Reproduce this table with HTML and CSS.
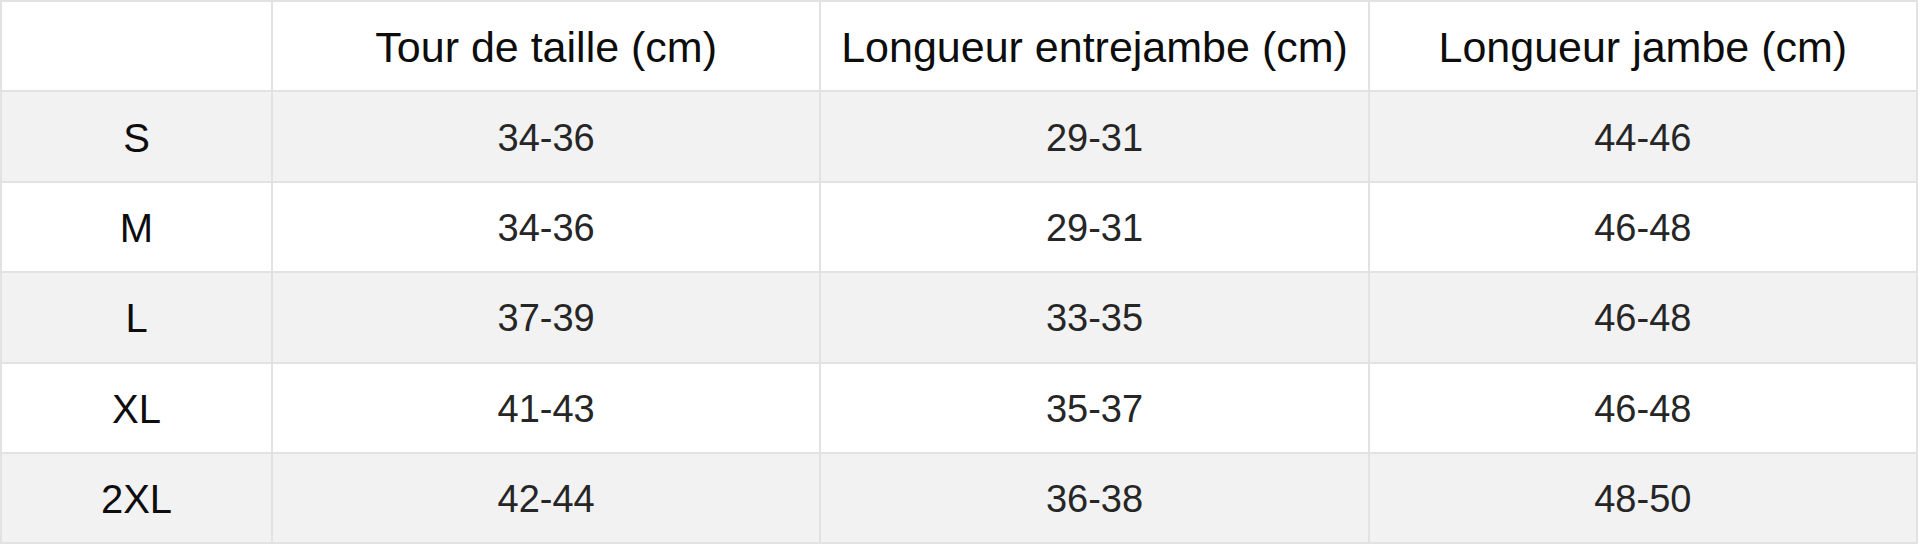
FILE: index.html
```html
<!DOCTYPE html>
<html lang="fr">
<head>
<meta charset="utf-8">
<title>Guide des tailles</title>
<link rel="stylesheet" href="styles.css">
</head>
<body>
<table class="size-table">
  <colgroup>
    <col class="col-size">
    <col class="col-val">
    <col class="col-val">
    <col class="col-val">
  </colgroup>
  <thead>
    <tr>
      <th></th>
      <th>Tour de taille (cm)</th>
      <th>Longueur entrejambe (cm)</th>
      <th>Longueur jambe (cm)</th>
    </tr>
  </thead>
  <tbody>
    <tr class="alt"><th>S</th><td>34-36</td><td>29-31</td><td>44-46</td></tr>
    <tr><th>M</th><td>34-36</td><td>29-31</td><td>46-48</td></tr>
    <tr class="alt"><th>L</th><td>37-39</td><td>33-35</td><td>46-48</td></tr>
    <tr><th>XL</th><td>41-43</td><td>35-37</td><td>46-48</td></tr>
    <tr class="alt"><th>2XL</th><td>42-44</td><td>36-38</td><td>48-50</td></tr>
  </tbody>
</table>
</body>
</html>
```

FILE: styles.css
```css
html, body {
  margin: 0;
  padding: 0;
  background: #ffffff;
}

.size-table {
  width: 1918px;
  border-collapse: collapse;
  table-layout: fixed;
  font-family: "Liberation Sans", Arial, sans-serif;
  color: #111111;
}

.col-size {
  width: 271px;
}

.size-table tr {
  height: 90.4px;
}

.size-table th,
.size-table td {
  border: 2px solid #e2e2e2;
  text-align: center;
  vertical-align: middle;
  padding: 3px 0 0 0;
}

.size-table thead th {
  font-size: 43px;
  font-weight: normal;
  color: #0d0d0d;
}

.size-table tbody th {
  font-size: 40px;
  font-weight: normal;
  color: #0d0d0d;
}

.size-table td {
  font-size: 38px;
  color: #262626;
}

.size-table tr.alt {
  background: #f2f2f2;
}
```
